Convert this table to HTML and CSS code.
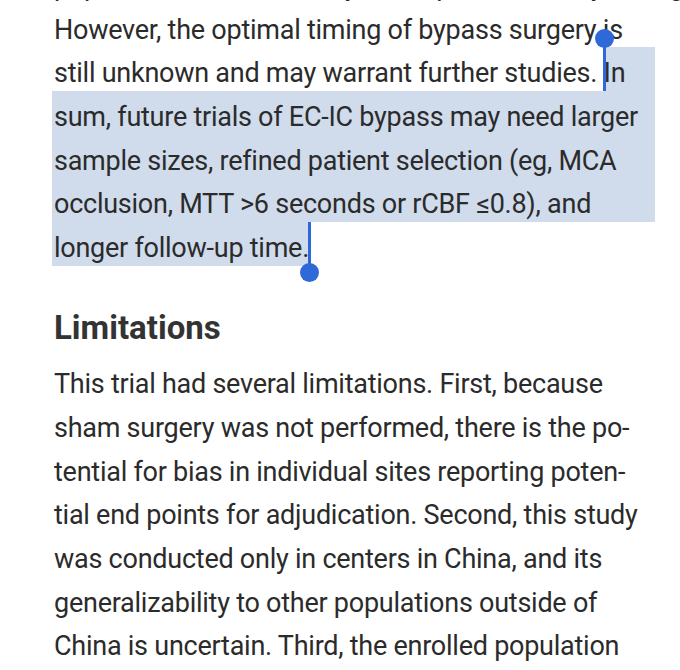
FILE: index.html
```html
<!DOCTYPE html>
<html lang="en">
<head>
<meta charset="utf-8">
<title>Article</title>
<link rel="stylesheet" href="styles.css">
</head>
<body>
<main class="article">
  <div class="para first">
    <div class="line">population with a hemodynamic profile than by timing.</div>
    <div class="line">However, the optimal timing of bypass surgery is</div>
    <div class="line split"><span class="plain">still unknown and may warrant further studies.&nbsp;</span><span class="sel start">In</span></div>
    <div class="line sel">sum, future trials of EC-IC bypass may need larger</div>
    <div class="line sel">sample sizes, refined patient selection (eg, MCA</div>
    <div class="line sel">occlusion, MTT &gt;6 seconds or rCBF ≤0.8), and</div>
    <div class="line"><span class="sel end">longer follow-up time.</span></div>
  </div>
  <h2 class="heading">Limitations</h2>
  <div class="para">
    <div class="line">This trial had several limitations. First, because</div>
    <div class="line">sham surgery was not performed, there is the po-</div>
    <div class="line">tential for bias in individual sites reporting poten-</div>
    <div class="line">tial end points for adjudication. Second, this study</div>
    <div class="line">was conducted only in centers in China, and its</div>
    <div class="line">generalizability to other populations outside of</div>
    <div class="line">China is uncertain. Third, the enrolled population</div>
  </div>
</main>
</body>
</html>
```

FILE: styles.css
```css
html, body {
  margin: 0;
  padding: 0;
  background: #ffffff;
}
body {
  width: 680px;
  height: 670px;
  overflow: hidden;
  font-family: Roboto, "Liberation Sans", sans-serif;
  color: #2b2b2b;
}
.article {
  padding-left: 52px;
  width: 603px;
}
.para.first {
  margin-top: -40px;
}
.line {
  box-sizing: border-box;
  height: 43.7px;
  padding-top: 9px;
  line-height: 34.7px;
  font-size: 27px;
  letter-spacing: -0.25px;
  padding-left: 2px;
  white-space: nowrap;
  display: flex;
  align-items: stretch;
}
.line.sel {
  background: #d0dcec;
}
.split .plain {
  flex: none;
}
.split .sel {
  flex: 1;
  position: relative;
  background: #d0dcec;
  margin-top: -9px;
  padding-top: 9px;
}
span.sel.end {
  position: relative;
  background: #d0dcec;
  margin: -9px 0 0 -2px;
  padding: 9px 0 0 2px;
}
.sel.start::before,
.sel.start::after,
.sel.end::before,
.sel.end::after {
  content: "";
  position: absolute;
  background: #2f68d8;
}
.sel.start::before {
  left: -1px;
  top: -9px;
  bottom: 0;
  width: 3px;
}
.sel.start::after {
  left: -9px;
  top: -18px;
  width: 19px;
  height: 19px;
  border-radius: 50%;
}
.sel.end::after {
  right: -2px;
  top: 0;
  bottom: -7px;
  width: 3px;
}
.sel.end::before {
  right: -10px;
  bottom: -16px;
  width: 19px;
  height: 19px;
  border-radius: 50%;
}
.heading {
  margin: 40px 0 8.5px;
  padding-left: 2px;
  font-size: 33px;
  line-height: 44px;
  font-weight: 700;
  color: #333333;
}
```
